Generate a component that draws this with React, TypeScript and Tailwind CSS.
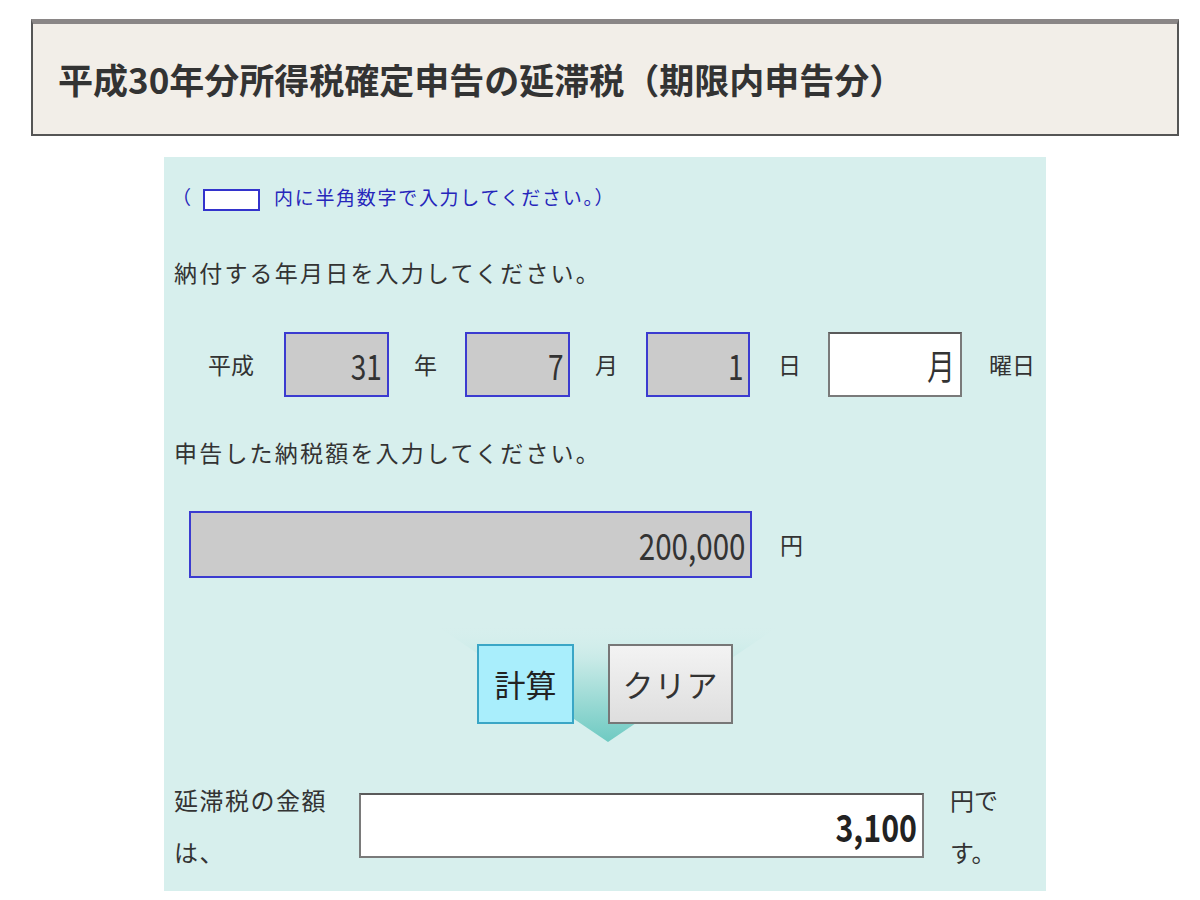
import React from "react";

const FONT = { fontFamily: '"Noto Sans CJK JP", "Noto Sans", sans-serif' };

const NumBox: React.FC<{ value: string; className?: string; gray?: boolean; bold?: boolean; size?: string }> = ({
  value,
  className = "",
  gray = true,
  bold = false,
  size = "text-[35px]",
}) => (
  <div
    className={`flex items-center justify-end pr-[5px] ${
      gray ? "bg-[#cbcbcb] border-2 border-[#3b3bd0]" : "bg-white border-2 border-[#7a7a7a] border-t-[#5a5a5a]"
    } ${className}`}
  >
    <span
      className={`inline-block origin-right scale-x-[0.8] leading-none ${size} ${
        bold ? "font-bold text-[#222]" : "text-[#333]"
      }`}
    >
      {value}
    </span>
  </div>
);

export default function App() {
  return (
    <div className="min-h-[900px] w-[1200px] bg-white text-[#333]" style={FONT}>
      <div className="pt-[19px] pl-[31px]">
        <div className="flex h-[117px] w-[1148px] items-center border-x-2 border-b-2 border-t-[5px] border-x-[#555] border-b-[#555] border-t-[#8a8686] bg-[#f2eee8] pl-[25px]">
          <h1 className="text-[35px] font-bold text-[#333]">
            平成30年分所得税確定申告の延滞税（期限内申告分）
          </h1>
        </div>
      </div>

      <div className="ml-[164px] mt-[21px] h-[734px] w-[882px] bg-[#d7efed]">
        <div className="box-content flex h-[24px] items-center pl-[8px] pt-[28px] text-[19px] text-[#2626bb]">
          <span>（</span>
          <span className="ml-[12px] mt-[6px] inline-block h-[22px] w-[57px] shrink-0 border-2 border-[#3333cc] bg-white" />
          <span className="ml-[14px] tracking-[1.7px]">内に半角数字で入力してください。）</span>
        </div>

        <div className="mt-[48px] flex h-[30px] items-center pl-[10px] text-[23px] tracking-[2.2px]">
          納付する年月日を入力してください。
        </div>

        <div className="mt-[45px] flex h-[65px] items-center text-[23px]">
          <span className="ml-[44px]">平成</span>
          <NumBox value="31" className="ml-[30px] h-[65px] w-[105px]" />
          <span className="ml-[25px]">年</span>
          <NumBox value="7" className="ml-[28px] h-[65px] w-[105px]" />
          <span className="ml-[25px]">月</span>
          <NumBox value="1" className="ml-[28px] h-[65px] w-[104px]" />
          <span className="ml-[28px]">日</span>
          <NumBox value="月" gray={false} className="ml-[27px] h-[65px] w-[134px]" />
          <span className="ml-[27px]">曜日</span>
        </div>

        <div className="mt-[40px] flex h-[30px] items-center pl-[10px] text-[23px] tracking-[2.2px]">
          申告した納税額を入力してください。
        </div>

        <div className="mt-[44px] flex h-[67px] items-center text-[23px]">
          <NumBox value="200,000" size="text-[37px]" className="ml-[25px] h-[67px] w-[563px]" />
          <span className="ml-[28px]">円</span>
        </div>

        <div className="relative mt-[66px] flex h-[80px] justify-center gap-[34px]">
          <svg
            className="absolute left-[270px] top-[-20px] h-[120px] w-[350px]"
            viewBox="0 0 350 120"
          >
            <defs>
              <linearGradient id="chev" x1="0" y1="0" x2="0" y2="1">
                <stop offset="0" stopColor="#d7efed" stopOpacity="0" />
                <stop offset="0.3" stopColor="#c8eae7" />
                <stop offset="1" stopColor="#6ecac2" />
              </linearGradient>
            </defs>
            <polygon points="0,0 348,0 174,118" fill="url(#chev)" />
          </svg>
          <button className="relative h-[80px] w-[97px] border-2 border-[#3aa6c6] bg-[#a9eefc] text-[31px] text-[#222]">
            計算
          </button>
          <button className="relative h-[80px] w-[125px] border-2 border-[#777] bg-gradient-to-b from-[#f3f3f3] to-[#dedede] text-[31px] tracking-[1px] text-[#333]">
            クリア
          </button>
        </div>

        <div className="mt-[50px] flex items-start text-[24px]">
          <div className="ml-[10px] w-[160px] leading-[52px] tracking-[1.5px]">
            延滞税の金額
            <br />
            は、
          </div>
          <NumBox value="3,100" gray={false} bold size="text-[38px]" className="ml-[25px] mt-[19px] h-[65px] w-[565px]" />
          <div className="ml-[26px] leading-[52px]">
            円で
            <br />
            す。
          </div>
        </div>
      </div>
    </div>
  );
}
